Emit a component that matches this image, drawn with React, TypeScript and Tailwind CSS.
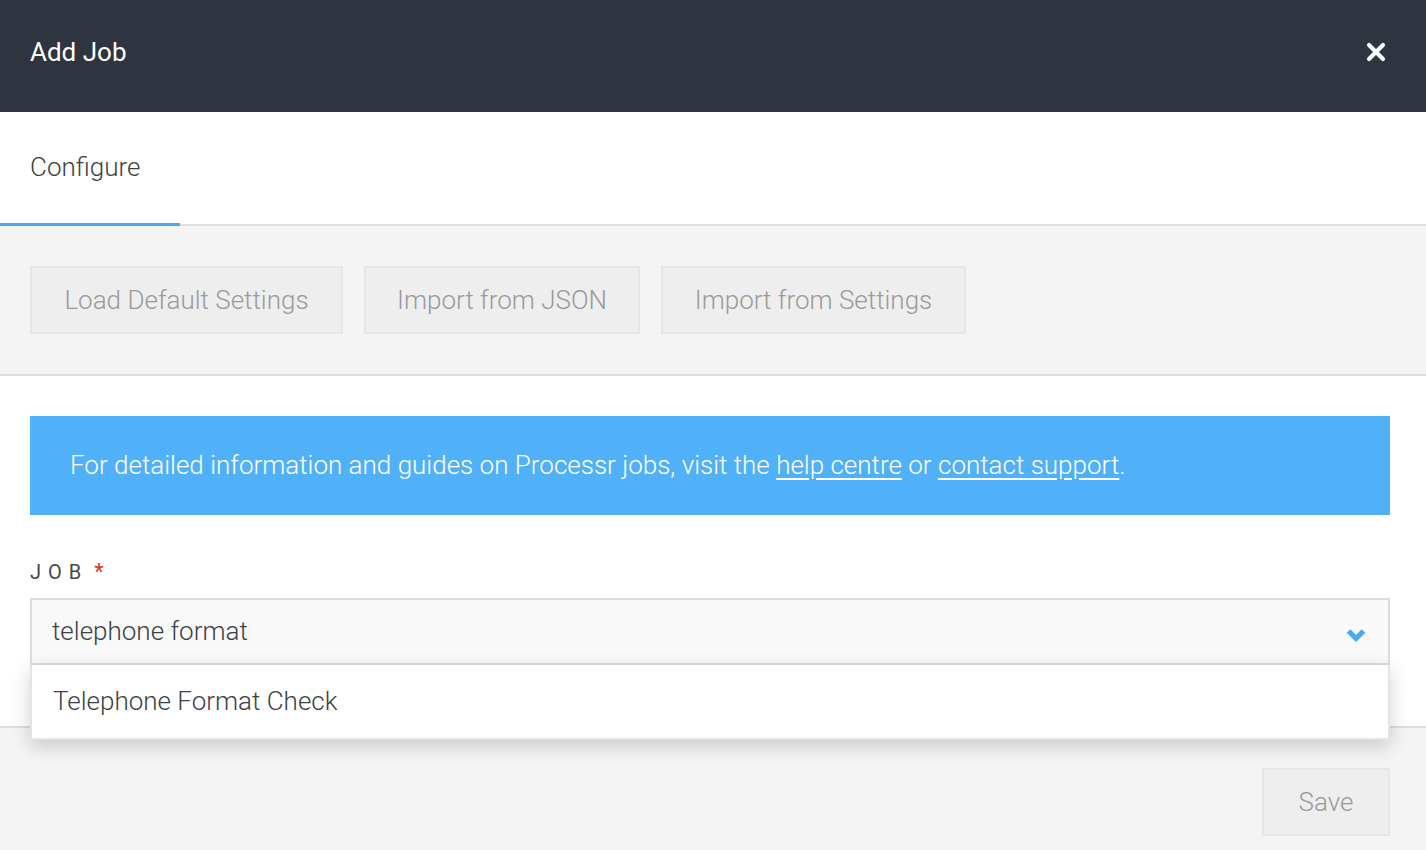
import { X } from "lucide-react";

const font = { fontFamily: "Roboto, 'Liberation Sans', sans-serif" };

function GhostButton({ label, className = "" }: { label: string; className?: string }) {
  return (
    <button
      type="button"
      className={`h-[68px] px-0 whitespace-nowrap bg-[#eeeeee] border-2 border-[#e6e6e6] text-[26px] font-light text-[#9a9a9a] cursor-default ${className}`}
    >
      {label}
    </button>
  );
}

export default function App() {
  return (
    <div className="w-[1426px] h-[850px] overflow-hidden bg-white flex flex-col" style={font}>
      {/* header */}
      <div className="h-[112px] shrink-0 bg-[#2e3440] flex items-center justify-between pl-[30px] pr-[36px] pb-[8px]">
        <h1 className="text-[26px] text-white font-normal">Add Job</h1>
        <X className="w-[28px] h-[28px] text-white" strokeWidth={3.5} />
      </div>

      {/* tabs */}
      <div className="h-[114px] shrink-0 flex border-b-2 border-[#e0e0e0]">
        <div className="w-[180px] flex items-center pl-[30px] border-b-[3px] border-[#4aa9f0] -mb-[2px]">
          <span className="text-[26px] font-light text-[#3c3f45]">Configure</span>
        </div>
      </div>

      {/* presets */}
      <div className="h-[150px] shrink-0 bg-[#f4f4f4] border-b-2 border-[#dedede] flex items-start gap-[21px] pl-[30px] pt-[40px]">
        <GhostButton label="Load Default Settings" className="w-[313px]" />
        <GhostButton label="Import from JSON" className="w-[276px]" />
        <GhostButton label="Import from Settings" className="w-[305px]" />
      </div>

      {/* body */}
      <div className="relative flex-1 flex flex-col">
        <div className="pl-[30px] pr-[36px] pt-[40px]">
          <div className="h-[99px] bg-[#51b1f8] flex items-center pl-[40px] text-[26px] font-light text-white">
            <p>
              For detailed information and guides on Processr jobs, visit the{" "}
              <a className="underline underline-offset-4">help centre</a> or{" "}
              <a className="underline underline-offset-4">contact support</a>.
            </p>
          </div>

          <div className="mt-[40px] flex items-center gap-[6px] text-[20px] text-[#45484e] tracking-[0.35em]">
            <span>JOB</span>
            <span className="text-[#e8332c] text-[22px]">*</span>
          </div>

          <div className="relative mt-[10px]">
            <div className="h-[67px] bg-[#f9f9f9] border-2 border-[#dddddd] flex items-center justify-between pl-[20px] pr-[22px]">
              <span className="text-[26px] font-light text-[#3c3f45]">telephone format</span>
              <svg viewBox="0 0 20 14" className="w-[20px] h-[14px] mt-[6px] text-[#4aa9f0]">
                <polyline
                  points="2.5,3 10,10.5 17.5,3"
                  fill="none"
                  stroke="currentColor"
                  strokeWidth="5"
                  strokeLinejoin="miter"
                />
              </svg>
            </div>
            <div className="absolute left-0 right-0 top-[67px] z-10 h-[75px] bg-white border-2 border-t-0 border-[#e4e4e4] shadow-[0_6px_18px_rgba(0,0,0,0.18)] flex items-center pl-[21px]">
              <span className="text-[26px] font-light text-[#3c3f45]">Telephone Format Check</span>
            </div>
          </div>
        </div>

        {/* footer */}
        <div className="mt-auto h-[124px] bg-[#f4f4f4] border-t-2 border-[#dedede] flex items-start justify-end pr-[36px] pt-[40px]">
          <button
            type="button"
            className="h-[68px] w-[128px] bg-[#eeeeee] border-2 border-[#e6e6e6] text-[26px] font-light text-[#9a9a9a] cursor-default"
          >
            Save
          </button>
        </div>
      </div>
    </div>
  );
}
